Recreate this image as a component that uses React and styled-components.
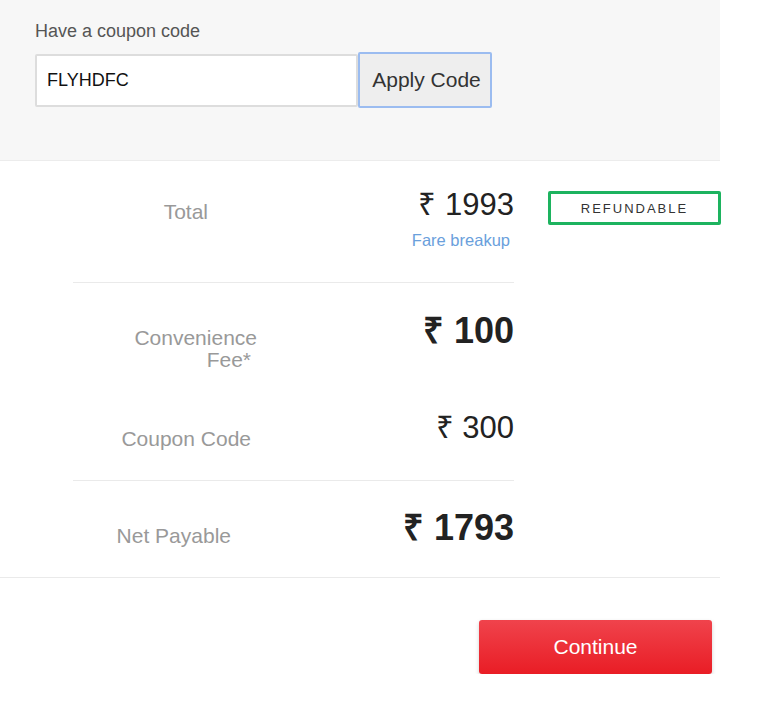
import styled, { createGlobalStyle } from 'styled-components';

const GlobalStyle = createGlobalStyle`
  body {
    margin: 0;
    background: #fff;
    font-family: "Liberation Sans", Arial, sans-serif;
  }
`;

export default function App() {
  return (
    <>
      <GlobalStyle />
      <Page>
        <CouponBox>
          <CouponLabel>Have a coupon code</CouponLabel>
          <CouponForm>
            <CouponInput defaultValue="FLYHDFC" />
            <ApplyButton>Apply Code</ApplyButton>
          </CouponForm>
        </CouponBox>

        <Summary>
          <TotalRow>
            <Label $width={135} $top={13}>
              Total
            </Label>
            <AmountCol>
              <Amount>₹ 1993</Amount>
              <FareLink>Fare breakup</FareLink>
            </AmountCol>
            <Badge>REFUNDABLE</Badge>
          </TotalRow>

          <Block>
            <FeeRow>
              <FeeLabel>
                Convenience
                <br />
                <Tail>Fee*</Tail>
              </FeeLabel>
              <Amount $bold>₹ 100</Amount>
            </FeeRow>
            <CouponRow>
              <Label $width={178} $top={17}>
                Coupon Code
              </Label>
              <Amount>₹ 300</Amount>
            </CouponRow>
          </Block>

          <NetRow>
            <Label $width={158} $top={17}>
              Net Payable
            </Label>
            <Amount $bold>₹ 1793</Amount>
          </NetRow>
        </Summary>

        <Footer>
          <ContinueButton>Continue</ContinueButton>
        </Footer>
      </Page>
    </>
  );
}

const Page = styled.div`
  width: 720px;
`;

const CouponBox = styled.div`
  background: #f7f7f7;
  height: 161px;
  box-sizing: border-box;
  padding: 21px 0 0 35px;
  border-bottom: 1px solid #ececec;
`;

const CouponLabel = styled.div`
  font-size: 18px;
  color: #555;
  margin-bottom: 10px;
`;

const CouponForm = styled.div`
  display: flex;
  align-items: center;
`;

const CouponInput = styled.input`
  width: 323px;
  height: 53px;
  box-sizing: border-box;
  border: 2px solid #ddd;
  border-radius: 2px;
  padding: 0 10px;
  font-family: "Liberation Sans", Arial, sans-serif;
  font-size: 18px;
  color: #111;
  background: #fff;
  outline: none;
`;

const ApplyButton = styled.button`
  width: 134px;
  height: 56px;
  box-sizing: border-box;
  border: 2px solid #9bbcf0;
  border-radius: 2px;
  background: #eee;
  font-family: "Liberation Sans", Arial, sans-serif;
  font-size: 21px;
  color: #333;
  padding: 0 0 0 3px;
`;

const Summary = styled.div`
  padding-left: 73px;
`;

const Row = styled.div`
  display: flex;
  align-items: flex-start;
  width: 441px;
  box-sizing: border-box;
`;

const TotalRow = styled(Row)`
  position: relative;
  height: 122px;
  padding-top: 26px;
  border-bottom: 1px solid #eaeaea;
`;

const Label = styled.div`
  width: ${(p) => p.$width}px;
  text-align: right;
  font-size: 21px;
  line-height: 24px;
  color: #999;
  padding-top: ${(p) => p.$top}px;
`;

const AmountCol = styled.div`
  flex: 1;
  display: flex;
  flex-direction: column;
  align-items: flex-end;
`;

const Amount = styled.div`
  flex: 1;
  text-align: right;
  font-size: ${(p) => (p.$bold ? 36 : 31)}px;
  line-height: ${(p) => (p.$bold ? 41 : 36)}px;
  font-weight: ${(p) => (p.$bold ? 700 : 400)};
  color: #222;
`;

const FareLink = styled.a`
  font-size: 16.5px;
  line-height: 19px;
  color: #6aa0dc;
  margin: 8px 4px 0 0;
  cursor: pointer;
`;

const Badge = styled.div`
  position: absolute;
  left: 475px;
  top: 30px;
  width: 173px;
  height: 34px;
  box-sizing: border-box;
  border: 3px solid #1db35f;
  border-radius: 2px;
  display: flex;
  align-items: center;
  justify-content: center;
  font-size: 13px;
  letter-spacing: 2px;
  color: #333;
`;

const Block = styled.div`
  width: 441px;
  padding-top: 27px;
  border-bottom: 1px solid #eaeaea;
`;

const FeeRow = styled(Row)`
  height: 100px;
`;

const FeeLabel = styled.div`
  width: 184px;
  text-align: right;
  font-size: 21px;
  line-height: 22px;
  color: #999;
  padding-top: 17px;
`;

const Tail = styled.span`
  margin-right: 6px;
`;

const CouponRow = styled(Row)`
  height: 70px;
`;

const NetRow = styled(Row)`
  height: 96px;
  padding-top: 26px;
`;

const Footer = styled.div`
  border-top: 1px solid #eaeaea;
  display: flex;
  justify-content: flex-end;
  padding: 42px 8px 0 0;
`;

const ContinueButton = styled.button`
  width: 233px;
  height: 54px;
  border: none;
  border-radius: 3px;
  background: linear-gradient(#f0434c, #e91d25);
  box-shadow: 0 2px 4px rgba(0, 0, 0, 0.18);
  color: #fff;
  font-family: "Liberation Sans", Arial, sans-serif;
  font-size: 21px;
`;
